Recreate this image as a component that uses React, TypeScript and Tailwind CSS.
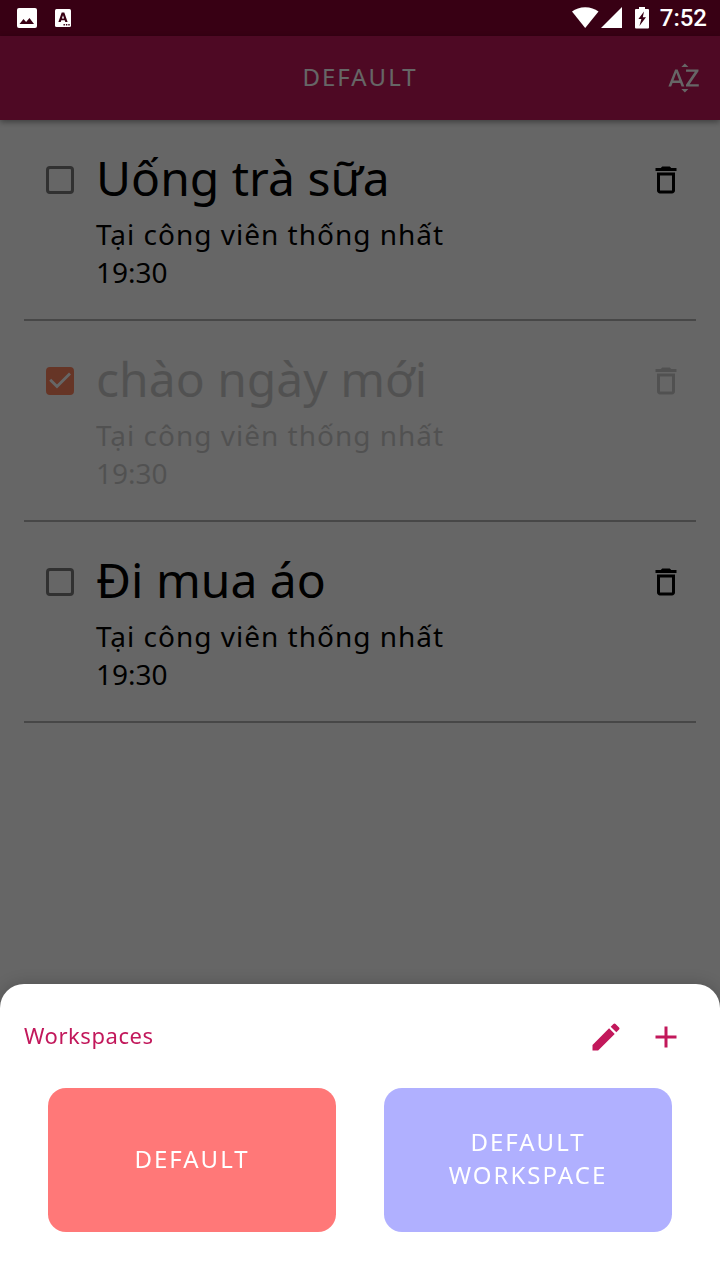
import { useState } from "react";
import { MdAdd, MdDeleteOutline, MdEdit, MdSortByAlpha } from "react-icons/md";

type Task = { id: number; title: string; place: string; time: string; done: boolean };

const initialTasks: Task[] = [
  { id: 1, title: "Uống trà sữa", place: "Tại công viên thống nhất", time: "19:30", done: false },
  { id: 2, title: "chào ngày mới", place: "Tại công viên thống nhất", time: "19:30", done: true },
  { id: 3, title: "Đi mua áo", place: "Tại công viên thống nhất", time: "19:30", done: false },
];

function StatusBar() {
  return (
    <div className="flex h-9 items-center justify-between bg-[#380014] pl-[17px] pr-[13px] text-white">
      <div className="flex items-center gap-[18px]">
        <svg width="20" height="20" viewBox="0 0 20 20" aria-hidden="true">
          <rect width="20" height="20" rx="2" fill="currentColor" />
          <path d="M2.500 16l4-5 2.600 3L12.500 10l4.500 6z" fill="#380014" />
        </svg>
        <svg width="16" height="18" viewBox="0 0 16 18" aria-hidden="true">
          <rect width="16" height="18" rx="1.500" fill="currentColor" />
          <path
            d="M6.700 3.500h2.600l3.300 9.500h-2.300l-.6-1.800H6.300L5.700 13H3.400zM8 6.200L6.900 9.500h2.200z"
            fill="#380014"
          />
          <path d="M8.500 15h1.400v1.400H8.500zM10.900 15h1.400v1.400h-1.400zM13.300 15h1.400v1.400h-1.400z" fill="#380014" />
        </svg>
      </div>
      <div className="flex items-center">
        <svg width="50" height="22" viewBox="0 0 50 22" fill="currentColor" aria-hidden="true">
          <path d="M0 4.500C3.500 1.800 8 .2 13.200.2s9.800 1.600 13.300 4.300L13.200 21z" />
          <path d="M50 0v21H29z" />
        </svg>
        <svg className="ml-[13px]" width="14" height="22" viewBox="0 0 14 22" aria-hidden="true">
          <path
            d="M4 0h6v2h3a1 1 0 0 1 1 1V20.500a1 1 0 0 1-1 1H1a1 1 0 0 1-1-1V3a1 1 0 0 1 1-1h3z"
            fill="currentColor"
          />
          <path d="M9 4.500L3.400 12h3l-2 7L11 10.200H7.800z" fill="#380014" />
        </svg>
        <span className="ml-[11px] font-[Roboto,sans-serif] text-2xl font-medium leading-9">7:52</span>
      </div>
    </div>
  );
}

function TaskItem({ task, onToggle }: { task: Task; onToggle: () => void }) {
  const inputId = `task-${task.id}`;
  return (
    <li className="flex items-start border-b-2 border-[#b1b1b1] pb-7">
      <div className="grid h-[120px] w-[72px] shrink-0 place-items-center">
        <input
          id={inputId}
          type="checkbox"
          checked={task.done}
          onChange={onToggle}
          className="peer col-start-1 row-start-1 size-7 appearance-none rounded-[4px] border-3 border-[#7a7a7a] checked:border-[#ff8560] checked:bg-[#ff8560]"
        />
        <svg
          className="pointer-events-none col-start-1 row-start-1 hidden text-white peer-checked:block"
          width="28"
          height="28"
          viewBox="0 0 28 28"
          fill="none"
          stroke="currentColor"
          strokeWidth="2.800"
          aria-hidden="true"
        >
          <path d="M4.200 12.800L11 19.600L24 6.600" />
        </svg>
      </div>
      <div className={task.done ? "min-w-0 flex-1 pt-6 opacity-20" : "min-w-0 flex-1 pt-6"}>
        <label htmlFor={inputId} className="block text-5xl leading-[68px]">
          {task.title}
        </label>
        <p className="mt-[3px] text-[28px] leading-[38px] tracking-[1px]">{task.place}</p>
        <p className="text-[28px] leading-[38px]">{task.time}</p>
      </div>
      <button
        type="button"
        aria-label={`Delete ${task.title}`}
        className={
          task.done
            ? "grid h-[120px] w-[60px] shrink-0 place-items-center opacity-20"
            : "grid h-[120px] w-[60px] shrink-0 place-items-center"
        }
      >
        <MdDeleteOutline size={36} />
      </button>
    </li>
  );
}

function WorkspaceSheet() {
  return (
    <section
      aria-label="Workspaces"
      className="fixed inset-x-0 bottom-0 rounded-t-3xl bg-white px-6 pb-12 pt-6 shadow-[0_0_16px_rgba(0,0,0,0.2)]"
    >
      <div className="flex h-[58px] items-center text-[#c2185b]">
        <h2 className="flex-1 pb-1 text-[22px] leading-[30px] tracking-wide">Workspaces</h2>
        <button type="button" aria-label="Edit workspaces" className="grid size-[60px] place-items-center">
          <MdEdit size={36} />
        </button>
        <button type="button" aria-label="Add workspace" className="grid size-[60px] place-items-center">
          <MdAdd size={36} />
        </button>
      </div>
      <div className="mt-[22px] grid grid-cols-2 gap-12 px-6 text-white">
        <button
          type="button"
          className="min-h-36 rounded-[18px] bg-[#ff7878] px-12 pb-1 text-2xl leading-[33px] tracking-[2px]"
        >
          DEFAULT
        </button>
        <button
          type="button"
          className="min-h-36 rounded-[18px] bg-[#b0b0ff] px-12 pb-1 text-2xl leading-[33px] tracking-[2px]"
        >
          DEFAULT WORKSPACE
        </button>
      </div>
    </section>
  );
}

export default function App() {
  const [tasks, setTasks] = useState(initialTasks);
  const toggle = (id: number) =>
    setTasks((list) => list.map((t) => (t.id === id ? { ...t, done: !t.done } : t)));

  return (
    <div className="flex min-h-screen flex-col bg-white font-['Noto_Sans',sans-serif] text-black">
      <StatusBar />
      <div className="relative flex flex-1 flex-col">
        <header className="grid h-[84px] grid-cols-[72px_1fr_72px] items-center bg-[#c2185b] text-white shadow-[0_2px_6px_rgba(0,0,0,0.4)]">
          <h1 className="col-start-2 pb-1 text-center text-2xl leading-[33px] tracking-[2px]">DEFAULT</h1>
          <button type="button" aria-label="Sort by name" className="grid h-full place-items-center">
            <MdSortByAlpha size={36} />
          </button>
        </header>
        <ul className="px-6">
          {tasks.map((task) => (
            <TaskItem key={task.id} task={task} onToggle={() => toggle(task.id)} />
          ))}
        </ul>
        <div className="absolute inset-0 bg-black/60" />
      </div>
      <WorkspaceSheet />
    </div>
  );
}
